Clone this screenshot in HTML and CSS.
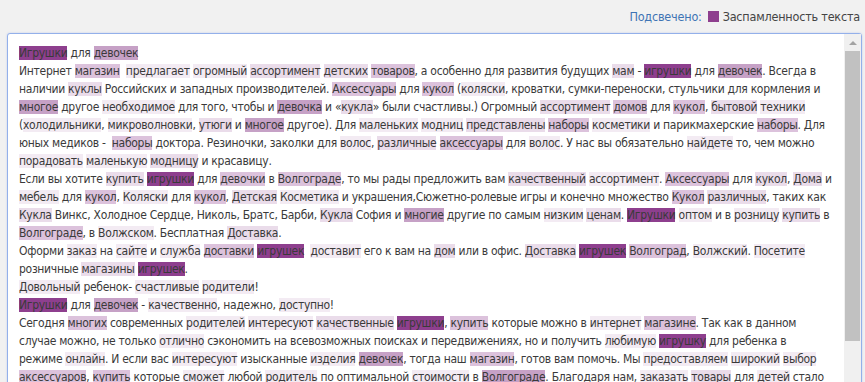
FILE: index.html
```html
<!DOCTYPE html>
<html lang="ru">
<head>
    <meta charset="UTF-8">
    <title>Заспамленность текста</title>
    <link rel="stylesheet" href="styles.css">
</head>
<body>
    <!-- легенда -->
    <div class="legend">
        <span class="legend-label">Подсвечено:</span>
        <span class="legend-box"></span>
        <span class="legend-text">Заспамленность текста</span>
    </div>

    <!-- текст с подсветкой -->
    <div class="text-box">
        <div class="text-body">
            <span class="h5">Игрушки</span> для <span class="h4">девочек</span><br>
            Интернет <span class="h3">магазин</span>&nbsp; <span class="h1">предлагает</span> <span class="h1">огромный</span> <span class="h2">ассортимент</span> <span class="h2">детских</span> <span class="h3">товаров</span>, а особенно для развития будущих <span class="h2">мам</span> - <span class="h5">игрушки</span> для <span class="h4">девочек</span>. Всегда в наличии <span class="h2">куклы</span> Российских и западных производителей. <span class="h3">Аксессуары</span> для <span class="h3">кукол</span> (<span class="h1">коляски</span>, кроватки, сумки-переноски, стульчики для кормления и <span class="h4">многое</span> другое <span class="h1">необходимое</span> для того, чтобы и <span class="h4">девочка</span> и «<span class="h2">кукла</span>» были счастливы.) Огромный <span class="h2">ассортимент</span> <span class="h3">домов</span> для <span class="h3">кукол</span>, <span class="h2">бытовой</span> <span class="h1">техники</span> (<span class="h1">холодильники</span>, <span class="h1">микроволновки</span>, <span class="h2">утюги</span> и <span class="h4">многое</span> другое). Для <span class="h1">маленьких</span> <span class="h1">модниц</span> <span class="h2">представлены</span> <span class="h3">наборы</span> <span class="h1">косметики</span> и парикмахерские <span class="h3">наборы</span>. Для юных медиков -&nbsp; <span class="h3">наборы</span> доктора. Резиночки, заколки для <span class="h1">волос</span>, <span class="h2">различные</span> <span class="h3">аксессуары</span> для <span class="h1">волос</span>. У нас вы обязательно <span class="h1">найдете</span> то, чем можно <span class="h1">порадовать</span> <span class="h1">маленькую</span> <span class="h2">модницу</span> и красавицу.<br>
            Если вы хотите <span class="h2">купить</span> <span class="h5">игрушки</span> для <span class="h3">девочки</span> в <span class="h3">Волгограде</span>, то мы рады предложить вам <span class="h2">качественный</span> <span class="h1">ассортимент</span>. <span class="h3">Аксессуары</span> для <span class="h2">кукол</span>, <span class="h2">Дома</span> и <span class="h1">мебель</span> для <span class="h3">кукол</span>, <span class="h1">Коляски</span> для <span class="h3">кукол</span>, <span class="h2">Детская</span> <span class="h1">Косметика</span> и украшения,Сюжетно-ролевые игры и конечно множество <span class="h3">Кукол</span> <span class="h2">различных</span>, таких как <span class="h2">Кукла</span> Винкс, Холодное Сердце, Николь, Братс, Барби, <span class="h2">Кукла</span> София и <span class="h4">многие</span> другие по самым <span class="h1">низким</span> <span class="h2">ценам</span>. <span class="h5">Игрушки</span> <span class="h1">оптом</span> и в <span class="h1">розницу</span> <span class="h2">купить</span> в <span class="h3">Волгограде</span>, в <span class="h1">Волжском</span>. Бесплатная <span class="h2">Доставка</span>.<br>
            Оформи <span class="h1">заказ</span> на <span class="h1">сайте</span> и <span class="h1">служба</span> <span class="h3">доставки</span> <span class="h5">игрушек</span>&nbsp; <span class="h1">доставит</span> его к вам на <span class="h2">дом</span> или в офис. <span class="h2">Доставка</span> <span class="h5">игрушек</span> <span class="h3">Волгоград</span>, <span class="h1">Волжский</span>. <span class="h1">Посетите</span> розничные <span class="h2">магазины</span> <span class="h5">игрушек</span>.<br>
            <span class="h1">Довольный</span> ребенок- <span class="h1">счастливые</span> <span class="h1">родители</span>!<br>
            <span class="h5">Игрушки</span> для <span class="h4">девочек</span> - <span class="h1">качественно</span>, надежно, <span class="h1">доступно</span>!<br>
            Сегодня <span class="h3">многих</span> современных <span class="h1">родителей</span> <span class="h1">интересуют</span> <span class="h2">качественные</span> <span class="h5">игрушки</span>, <span class="h3">купить</span> которые можно в <span class="h1">интернет</span> <span class="h3">магазине</span>. Так как в данном случае можно, не только <span class="h1">отлично</span> сэкономить на всевозможных поисках и передвижениях, но и получить <span class="h1">любимую</span> <span class="h5">игрушку</span> для ребенка в режиме <span class="h1">онлайн</span>. И если вас <span class="h1">интересуют</span> изысканные <span class="h1">изделия</span> <span class="h4">девочек</span>, тогда наш <span class="h3">магазин</span>, готов вам помочь. Мы <span class="h1">предоставляем</span> <span class="h1">широкий</span> <span class="h1">выбор</span> <span class="h3">аксессуаров</span>, <span class="h3">купить</span> которые <span class="h1">сможет</span> любой <span class="h1">родитель</span> по оптимальной <span class="h1">стоимости</span> в <span class="h4">Волгограде</span>. Благодаря нам, <span class="h1">заказать</span> <span class="h2">товары</span> для <span class="h1">детей</span> стало еще проще и <span class="h1">выгодней</span>. Мы <span class="h1">обеспечиваем</span> <span class="h1">максимально</span> <span class="h1">выгодные</span> <span class="h1">условия</span> для всех обратившихся <span class="h1">людей</span>, и к нам <span class="h1">предпочитают</span> <span class="h1">обращаться</span> снова и снова.
        </div>
        <div class="scrollbar">
            <div class="scroll-arrow"></div>
            <div class="scroll-thumb"></div>
        </div>
    </div>
</body>
</html>
```

FILE: styles.css
```css
/* базовые стили */
body {
    margin: 0;
    padding: 0 3px 0 7px;
    background: #f1f1f1;
    font-family: "DejaVu Sans Condensed", Tahoma, sans-serif;
    font-size: 12px;
    color: #3a3a3a;
    overflow: hidden;
}

/* легенда сверху */
.legend {
    display: flex;
    justify-content: flex-end;
    align-items: center;
    gap: 4px;
    height: 33px;
    padding-right: 2px;
    font-size: 12.5px;
    letter-spacing: -0.2px;
}

.legend-label {
    color: #3f74b4;
}

.legend-box {
    width: 11px;
    height: 11px;
    margin-left: 2px;
    background: #8e3f8e;
}

.legend-text {
    color: #444;
}

/* блок с текстом */
.text-box {
    display: flex;
    height: 360px;
    background: white;
    border: 1px solid #93b0ea;
    border-radius: 3px;
    box-shadow: 0 0 2px rgba(120, 150, 230, 0.4);
}

.text-body {
    flex: 1;
    padding: 10px 12px 0 11px;
    line-height: 18px;
    letter-spacing: -0.29px;
}

/* уровни подсветки */
.h1 { background: #f3ebf3; }
.h2 { background: #eadcea; }
.h3 { background: #dcc2dc; }
.h4 { background: #c6a1c6; }
.h5 { background: #8e3f8e; }

/* полоса прокрутки */
.scrollbar {
    width: 17px;
    background: #f0f0f0;
    display: flex;
    flex-direction: column;
    align-items: center;
}

.scroll-arrow {
    width: 0;
    height: 0;
    margin: 7px 0 6px;
    border-left: 4px solid transparent;
    border-right: 4px solid transparent;
    border-bottom: 4px solid #a3a3a3;
}

.scroll-thumb {
    width: 15px;
    height: 290px;
    background: #c1c1c1;
}
```
